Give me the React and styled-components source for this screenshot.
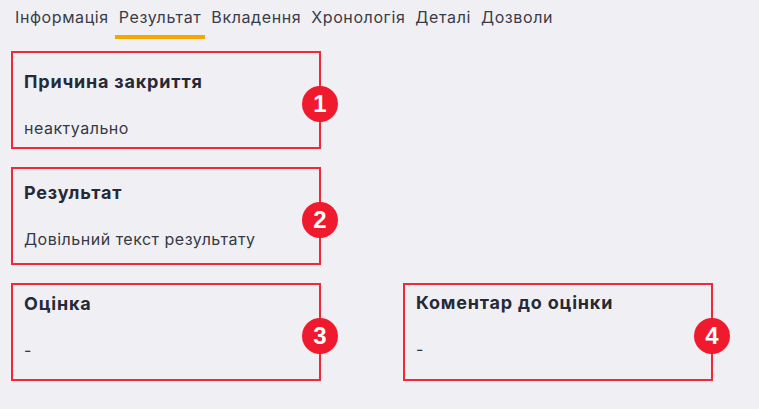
import React from "react";
import styled, { createGlobalStyle } from "styled-components";

const Global = createGlobalStyle`
  html, body { margin: 0; padding: 0; background: #f0f0f4; }
  body { font-family: Inter, "Noto Sans", sans-serif; color: #2b2d3a; }
  * { box-sizing: border-box; }
`;

const Page = styled.div`
  width: 759px;
  height: 409px;
  background: #f0f0f4;
  overflow: hidden;
`;

const TabBar = styled.nav`
  display: flex;
  gap: 2px;
  padding: 0 11px;
`;

const Tab = styled.div`
  font-size: 16px;
  letter-spacing: 0.6px;
  line-height: 22px;
  padding: 6px 4px 7px;
  color: #3a3c48;
  border-bottom: 4px solid ${(p) => (p.$active ? "#f5a700" : "transparent")};
  white-space: nowrap;
`;

const Grid = styled.div`
  display: grid;
  grid-template-columns: 310px 310px;
  column-gap: 82px;
  row-gap: 18px;
  padding: 12px 11px 0;
`;

const Field = styled.section`
  position: relative;
  height: 98px;
  border: 2px solid #f0283a;
  padding: ${(p) => p.$top}px 12px 0 11px;
  grid-column: ${(p) => p.$col};
`;

const Title = styled.h3`
  margin: 0;
  font-size: 18px;
  letter-spacing: 0.8px;
  line-height: 24px;
  font-weight: 700;
  color: #272936;
`;

const Value = styled.p`
  margin: 23px 0 0;
  font-size: 16px;
  letter-spacing: 0.5px;
  line-height: 22px;
  color: #363845;
`;

const Badge = styled.span`
  position: absolute;
  right: -19px;
  top: 33px;
  width: 36px;
  height: 36px;
  border-radius: 50%;
  background: #ef1a2d;
  color: #fff;
  font-family: "Liberation Sans", Arial, sans-serif;
  font-weight: 700;
  font-size: 24px;
  display: flex;
  align-items: center;
  justify-content: center;
`;

const tabs = ["Інформація", "Результат", "Вкладення", "Хронологія", "Деталі", "Дозволи"];

const fields = [
  { title: "Причина закриття", value: "неактуально", top: 17, col: "1", n: 1 },
  { title: "Результат", value: "Довільний текст результату", top: 12, col: "1", n: 2 },
  { title: "Оцінка", value: "-", top: 7, col: "1", n: 3 },
  { title: "Коментар до оцінки", value: "-", top: 6, col: "2", n: 4 },
];

export default function App() {
  return (
    <Page>
      <Global />
      <TabBar>
        {tabs.map((t) => (
          <Tab key={t} $active={t === "Результат"}>
            {t}
          </Tab>
        ))}
      </TabBar>
      <Grid>
        {fields.map((f) => (
          <Field key={f.n} $top={f.top} $col={f.col}>
            <Title>{f.title}</Title>
            <Value>{f.value}</Value>
            <Badge>{f.n}</Badge>
          </Field>
        ))}
      </Grid>
    </Page>
  );
}
